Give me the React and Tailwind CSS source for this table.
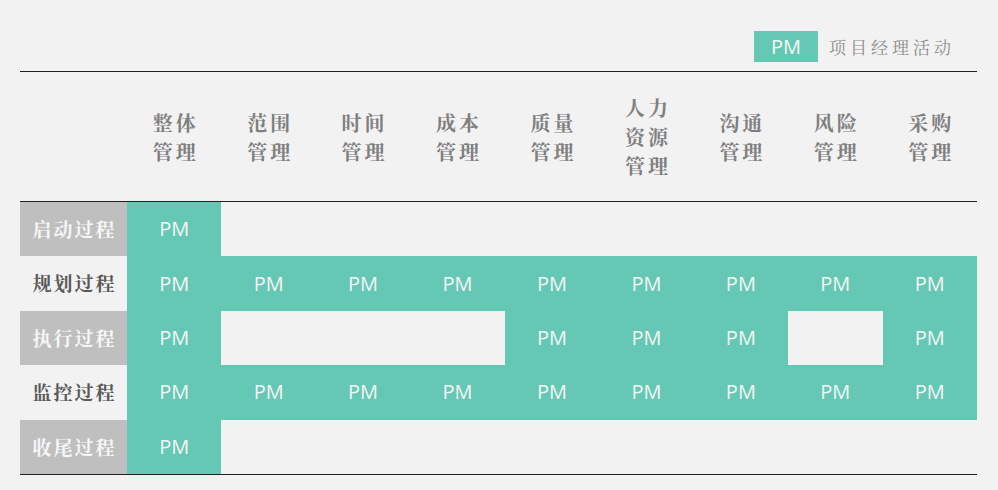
import React from 'react';

const cjk = { fontFamily: '"Noto Serif CJK SC", "Noto Sans CJK SC", serif' };
const latin = { fontFamily: '"Open Sans", "Noto Sans", sans-serif' };

const columns = [
  ['整体', '管理'],
  ['范围', '管理'],
  ['时间', '管理'],
  ['成本', '管理'],
  ['质量', '管理'],
  ['人力', '资源', '管理'],
  ['沟通', '管理'],
  ['风险', '管理'],
  ['采购', '管理'],
];

// 1 = 项目经理参与
const rows = [
  { name: '启动过程', shaded: true, cells: [1, 0, 0, 0, 0, 0, 0, 0, 0] },
  { name: '规划过程', shaded: false, cells: [1, 1, 1, 1, 1, 1, 1, 1, 1] },
  { name: '执行过程', shaded: true, cells: [1, 0, 0, 0, 1, 1, 1, 0, 1] },
  { name: '监控过程', shaded: false, cells: [1, 1, 1, 1, 1, 1, 1, 1, 1] },
  { name: '收尾过程', shaded: true, cells: [1, 0, 0, 0, 0, 0, 0, 0, 0] },
];

export default function App() {
  return (
    <div className="w-[998px] h-[490px] bg-[#f2f2f2] overflow-hidden">
      <div className="flex justify-end items-center pt-[31px] pr-[43px] h-[62px]">
        <div
          className="w-[64px] h-[31px] bg-[#64c8b4] text-[#f7f7f7] text-[20px] flex items-center justify-center"
          style={latin}
        >
          PM
        </div>
        <span className="ml-[11px] text-[17px] tracking-[4px] text-[#8c8c8c]" style={cjk}>
          项目经理活动
        </span>
      </div>

      <div className="ml-[20px] w-[957px] mt-[9px] border-t-[1.5px] border-[#222]">
        <div className="grid grid-cols-[107px_repeat(9,1fr)] h-[130px] border-b-[1.5px] border-[#222]">
          <div />
          {columns.map((lines, i) => (
            <div key={i} className="flex flex-col items-center justify-center">
              {lines.map((l) => (
                <div
                  key={l}
                  className="text-[20px] leading-[29px] font-bold tracking-[3px] pl-[3px] text-[#7f7f7f]"
                  style={cjk}
                >
                  {l}
                </div>
              ))}
            </div>
          ))}
        </div>

        <div className="border-b-[1.5px] border-[#222]">
          {rows.map((r) => (
            <div key={r.name} className="grid grid-cols-[107px_repeat(9,1fr)] h-[54.4px]">
              <div
                className={
                  'flex items-center justify-center text-[19px] font-bold tracking-[2px] pl-[2px] ' +
                  (r.shaded ? 'bg-[#bfbfbf] text-[#f7f7f7]' : 'text-[#595959]')
                }
                style={cjk}
              >
                {r.name}
              </div>
              {r.cells.map((c, i) => (
                <div
                  key={i}
                  className={
                    'flex items-center justify-center text-[20px] text-[#f5f5f5] ' +
                    (c ? 'bg-[#64c8b4]' : '')
                  }
                  style={latin}
                >
                  {c ? 'PM' : ''}
                </div>
              ))}
            </div>
          ))}
        </div>
      </div>
    </div>
  );
}
